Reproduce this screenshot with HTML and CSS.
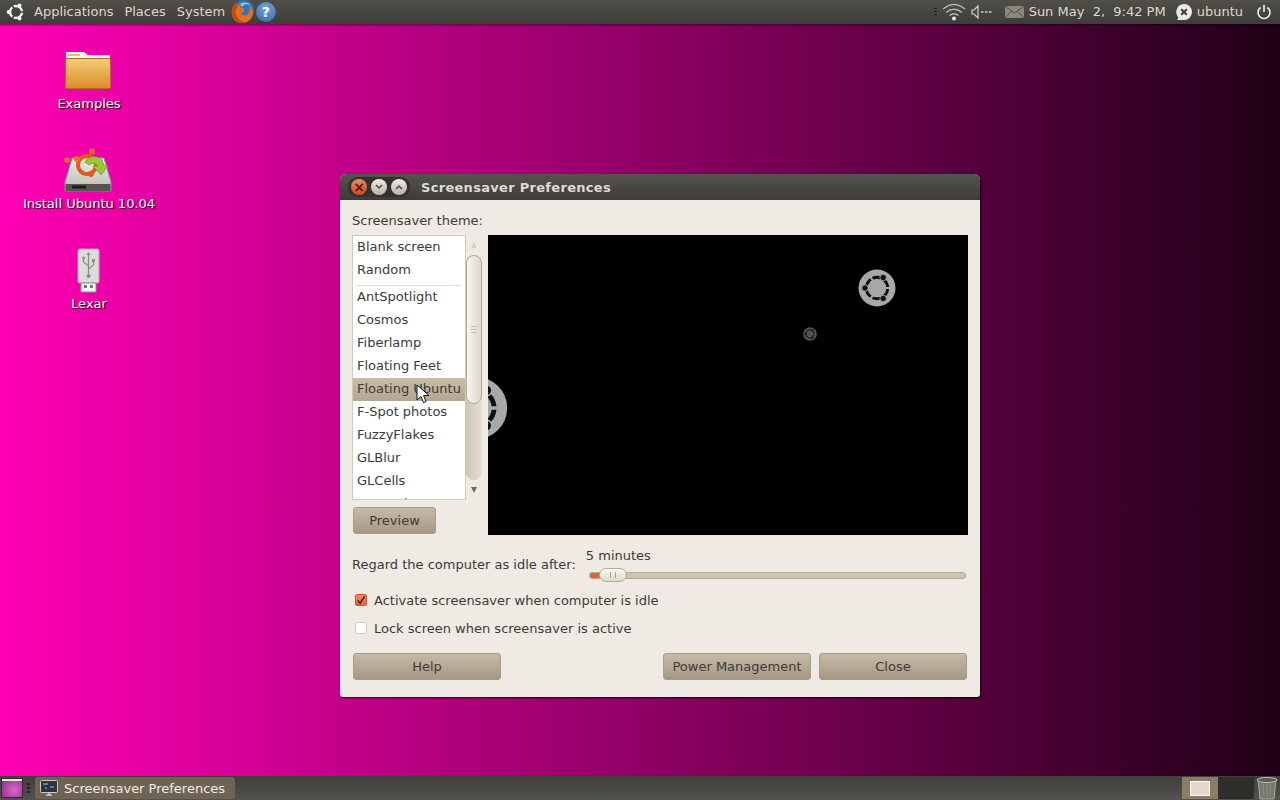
FILE: index.html
```html
<!DOCTYPE html>
<html lang="en">
  <head>
    <meta charset="UTF-8" />
    <title>Screensaver Preferences</title>
    <link rel="stylesheet" href="styles.css">
  </head>
  <body>
    <svg class="defs" width="0" height="0">
      <symbol id="ubuntuLogo" viewBox="0 0 40 40">
        <circle cx="20" cy="20" r="19.5" fill="#a8a8a8" />
        <circle cx="20" cy="20" r="11.300" fill="none" stroke="#111" stroke-width="3" />
        <path d="M20 20H38M20 20L11 4.400M20 20L11 35.600" stroke="#a8a8a8" stroke-width="2.200" />
        <circle cx="26.500" cy="9" r="3.400" fill="#111" stroke="#a8a8a8" />
        <circle cx="26.500" cy="31" r="3.400" fill="#111" stroke="#a8a8a8" />
        <circle cx="7.300" cy="20" r="3.400" fill="#111" stroke="#a8a8a8" />
      </symbol>
    </svg>

    <div class="top-panel">
      <div class="panel-left">
        <svg class="foot" width="20" height="20" viewBox="0 0 20 20">
          <circle cx="10" cy="10" r="6" fill="none" stroke="#f4f2ee" stroke-width="2.400" />
          <path d="M10 10L17 10M10 10L6 3M10 10L6 17" stroke="#45443f" stroke-width="1.600" />
          <circle cx="13.500" cy="3.600" r="2" fill="#f4f2ee" />
          <circle cx="13.500" cy="16.400" r="2" fill="#f4f2ee" />
          <circle cx="2.600" cy="10" r="2" fill="#f4f2ee" />
        </svg>
        <span class="menu-item">Applications</span>
        <span class="menu-item">Places</span>
        <span class="menu-item">System</span>
        <svg class="launcher" width="24" height="24" viewBox="0 0 24 24">
          <circle cx="13" cy="10" r="10" fill="#2f78c0" />
          <path d="M9 4c3-2 8-2 10 1-2-1-5-1-6 0l-2 2z" fill="#8cc4ec" />
          <path d="M18 5c4 3 5 8 3 12-2 4-6 6-10 6C6 23 2 20 1 15 0 10 2 6 5 3c0 2 0 3 1 4 1-2 3-3 5-3-1 1-2 2-2 4 1-.5 3 0 4 1 1 2-1 3-3 4 1 2 3 3 6 2 3-2 3-7 2-10z" fill="#e3701c" />
          <path d="M5 3c0 2 0 3 1 4-2 3-2 8 1 11 2 3 5 4 8 4-1 .6-2.600 1-4 1C6 23 2 20 1 15 0 10 2 6 5 3z" fill="#c24a10" />
        </svg>
        <span class="help-icon">?</span>
      </div>
      <div class="panel-right">
        <span class="tray-handle"></span>
        <svg class="wifi" width="24" height="20" viewBox="0 0 24 20">
          <path d="M1 7Q12-2 23 7M4 10.500Q12 4 20 10.500M7.500 13.500Q12 10 16.500 13.500" fill="none" stroke="#b8b5ad" stroke-width="1.400" />
          <circle cx="12" cy="16.500" r="2" fill="#f0eee8" />
        </svg>
        <svg class="speaker" width="22" height="14" viewBox="0 0 22 14">
          <path d="M1 5h2l4-4v12l-4-4H1z" fill="none" stroke="#d6d3cb" stroke-width="1.200" />
          <path d="M10 7h2.500M14 7h2.500M18 7h2.500" stroke="#d6d3cb" stroke-width="1.300" />
        </svg>
        <svg class="mail" width="19" height="12" viewBox="0 0 19 12">
          <rect width="19" height="12" fill="#8a877e" />
          <path d="M0 0l9.500 7L19 0M0 12l7-7M19 12l-7-7" fill="none" stroke="#55534d" />
        </svg>
        <span class="clock">Sun May &nbsp;2, &nbsp;9:42 PM</span>
        <svg class="me-icon" width="18" height="18" viewBox="0 0 18 18">
          <path d="M9 1a8 8 0 0 1 0 16H2l1.500-2.500A8 8 0 0 1 9 1z" fill="#ece9e2" />
          <path d="M6.200 6.200l5.600 5.600M11.800 6.200l-5.600 5.600" stroke="#3c3b37" stroke-width="2" />
        </svg>
        <span class="user-name">ubuntu</span>
        <svg class="power" width="16" height="16" viewBox="0 0 16 16">
          <path d="M4.700 3.500a6 6 0 1 0 6.600 0" fill="none" stroke="#ece9e2" stroke-width="1.700" />
          <path d="M8 1v7" stroke="#ece9e2" stroke-width="1.700" />
        </svg>
      </div>
    </div>

    <div class="desktop">
      <div class="desk-icon icon-examples">
        <svg width="48" height="48" viewBox="0 0 48 48">
          <defs>
            <linearGradient id="folderFill" x1="0" y1="0" x2="0" y2="1">
              <stop offset="0" stop-color="#f0cf78" />
              <stop offset="1" stop-color="#dc8a2a" />
            </linearGradient>
          </defs>
          <path d="M2 5a1 1 0 0 1 1-1h17l4 3h21a1 1 0 0 1 1 1v10H2z" fill="#f6f4f0" />
          <rect x="4" y="6" width="12" height="2" fill="#e8b878" />
          <rect x="1.500" y="10.500" width="45" height="30" rx="1.500" fill="url(#folderFill)" stroke="#b06c20" />
        </svg>
        <span class="desk-label">Examples</span>
      </div>
      <div class="desk-icon icon-install">
        <svg width="48" height="48" viewBox="0 0 48 48">
          <defs>
            <linearGradient id="driveFill" x1="0" y1="0" x2="0" y2="1">
              <stop offset="0" stop-color="#f0f0ec" />
              <stop offset="1" stop-color="#b8b8b2" />
            </linearGradient>
          </defs>
          <path d="M8 10h32l7 24v9H1v-9z" fill="url(#driveFill)" stroke="#8a8a84" />
          <ellipse cx="24" cy="24" rx="17" ry="9" fill="none" stroke="#d2d2cc" />
          <rect x="1.500" y="36" width="45" height="7" fill="#55554f" />
          <rect x="8" y="37.500" width="14" height="3" fill="#1c1c1a" />
          <circle cx="23" cy="17" r="9" fill="none" stroke="#e2591a" stroke-width="4" />
          <circle cx="13" cy="11" r="3" fill="#e8701e" />
          <circle cx="28" cy="3.500" r="3" fill="#e8701e" />
          <circle cx="27" cy="26" r="3" fill="#e2591a" />
          <circle cx="3" cy="12" r="2.800" fill="#e8701e" />
          <path d="M21 14a10 9 0 0 1 17-2l2 6h4l-7 9-8-9h5a6 6 0 0 0-9-1z" fill="#9cc43c" stroke="#74a024" stroke-width=".8" />
        </svg>
        <span class="desk-label">Install Ubuntu 10.04</span>
      </div>
      <div class="desk-icon icon-lexar">
        <svg width="48" height="48" viewBox="0 0 48 48">
          <rect x="13" y="1" width="21" height="34" rx="1.500" fill="#dcdcd8" stroke="#b0b0aa" />
          <rect x="16" y="35" width="15" height="9" fill="#f4f4f2" stroke="#8e8e88" />
          <rect x="19" y="37" width="3" height="3" fill="#77776f" />
          <rect x="25" y="37" width="3" height="3" fill="#77776f" />
          <path d="M23.500 6v22M23.500 18l-5-4v-3M23.500 21l5-4v-3" fill="none" stroke="#8e8e88" stroke-width="1.300" />
          <circle cx="23.500" cy="28" r="2" fill="#8e8e88" />
          <circle cx="18.500" cy="10" r="1.500" fill="#8e8e88" />
          <rect x="27" y="11" width="3" height="3" fill="#8e8e88" />
          <path d="M23.500 4l-2 3h4z" fill="#8e8e88" />
        </svg>
        <span class="desk-label">Lexar</span>
      </div>

      <div class="window">
        <div class="title-bar">
          <div class="win-buttons">
            <span class="win-btn win-close">&#215;</span>
            <span class="win-btn">
              <svg width="8" height="6" viewBox="0 0 8 6"><path d="M1 1l3 3 3-3" fill="none" stroke="#4a4842" stroke-width="1.500" /></svg>
            </span>
            <span class="win-btn">
              <svg width="8" height="6" viewBox="0 0 8 6"><path d="M1 5l3-3 3 3" fill="none" stroke="#4a4842" stroke-width="1.500" /></svg>
            </span>
          </div>
          <span class="win-title">Screensaver Preferences</span>
        </div>
        <div class="win-body">
          <div class="theme-label">Screensaver theme:</div>
          <div class="theme-row">
            <div class="theme-col">
              <div class="list-wrap">
                <ul class="theme-list">
                  <li>Blank screen</li>
                  <li>Random</li>
                  <li class="list-sep"></li>
                  <li>AntSpotlight</li>
                  <li>Cosmos</li>
                  <li>Fiberlamp</li>
                  <li>Floating Feet</li>
                  <li class="selected">Floating Ubuntu</li>
                  <li>F-Spot photos</li>
                  <li>FuzzyFlakes</li>
                  <li>GLBlur</li>
                  <li>GLCells</li>
                  <li>GLMatrix</li>
                </ul>
                <div class="scrollbar">
                  <span class="arrow-up"></span>
                  <div class="scroll-track">
                    <div class="scroll-thumb"><span class="thumb-grip"></span></div>
                  </div>
                  <span class="arrow-down"></span>
                </div>
                <svg class="cursor" width="14" height="21" viewBox="0 0 14 21">
                  <path d="M1 1v15l4-3.500 2.500 6 2.500-1-2.500-6H13z" fill="#fff" stroke="#111" />
                </svg>
              </div>
              <button class="btn btn-preview">Preview</button>
            </div>
            <div class="preview">
              <svg class="logo logo-big"><use href="#ubuntuLogo" /></svg>
              <svg class="logo logo-mid"><use href="#ubuntuLogo" /></svg>
              <svg class="logo logo-small"><use href="#ubuntuLogo" /></svg>
            </div>
          </div>

          <div class="idle-row">
            <span class="idle-label">Regard the computer as idle after:</span>
            <div class="idle-control">
              <div class="idle-value">5 minutes</div>
              <div class="slider">
                <div class="slider-fill"></div>
                <div class="slider-thumb"><span class="grip-lines"></span></div>
              </div>
            </div>
          </div>

          <label class="check-row">
            <span class="check checked">
              <svg width="11" height="11" viewBox="0 0 11 11"><path d="M2 5.500l2.500 3L9.500 1" fill="none" stroke="#3a2a22" stroke-width="1.800" /></svg>
            </span>
            Activate screensaver when computer is idle
          </label>
          <label class="check-row">
            <span class="check"></span>
            Lock screen when screensaver is active
          </label>

          <div class="action-row">
            <button class="btn btn-wide">Help</button>
            <div class="action-right">
              <button class="btn btn-wide">Power Management</button>
              <button class="btn btn-wide">Close</button>
            </div>
          </div>
        </div>
      </div>
    </div>

    <div class="bottom-panel">
      <div class="panel-left">
        <div class="show-desktop"><span class="show-title"></span></div>
        <span class="handle"></span>
        <div class="task-button">
          <svg width="18" height="17" viewBox="0 0 18 17">
            <rect x=".5" y=".5" width="17" height="12" rx="1" fill="#2c3440" stroke="#c8ccd0" />
            <path d="M3 4h5M10 7h4M5 8h2" stroke="#a8c0dc" />
            <path d="M6 15h6M9 13v2" stroke="#c8ccd0" stroke-width="1.500" />
          </svg>
          <span>Screensaver Preferences</span>
        </div>
      </div>
      <div class="panel-right">
        <div class="workspace active"><span class="ws-window"></span></div>
        <div class="workspace"></div>
        <svg class="trash" width="24" height="24" viewBox="0 0 24 24">
          <path d="M3 3h18l-2 20H5z" fill="#77776f" stroke="#a8a8a0" />
          <ellipse cx="12" cy="4" rx="10" ry="2.500" fill="#5a5a54" stroke="#c0c0b8" />
          <path d="M8 8l1 13M16 8l-1 13M12 8v13" stroke="#8e8e86" />
        </svg>
      </div>
    </div>
  </body>
</html>
```

FILE: styles.css
```css
html,
body {
  height: 100%;
}
body {
  margin: 0;
  width: 1280px;
  height: 800px;
  overflow: hidden;
  display: flex;
  flex-direction: column;
  font-family: "DejaVu Sans", sans-serif;
  font-size: 13px;
  color: #3c3b37;
  background-color: #3c3b37;
}
.defs {
  position: absolute;
}

/* panels */
.top-panel,
.bottom-panel {
  display: flex;
  justify-content: space-between;
  align-items: center;
  flex: none;
  height: 24px;
  background: linear-gradient(#514f4a, #3d3c38);
  color: #dfd8c8;
}
.top-panel {
  box-shadow: 0 1px 2px rgba(0, 0, 0, 0.5);
  position: relative;
  z-index: 2;
}
.bottom-panel {
  background: linear-gradient(#3f3e3a, #54524d);
}
.panel-left,
.panel-right {
  display: flex;
  align-items: center;
  height: 100%;
}
.foot {
  margin: 0 2.500px 0 6px;
}
.menu-item {
  margin: 0 5.500px 2px;
}
.help-icon {
  width: 20px;
  height: 20px;
  margin-left: 1px;
  border-radius: 50%;
  background: radial-gradient(circle at 50% 30%, #7aa6d6, #2f64a4);
  color: #f2f6fa;
  font-size: 14px;
  font-weight: bold;
  line-height: 20px;
  text-align: center;
}
.tray-handle {
  width: 3px;
  height: 9px;
  margin-right: 5px;
  background: repeating-linear-gradient(#23221f 0 1px, transparent 1px 3px);
}
.wifi {
  margin-right: 5px;
}
.speaker {
  margin-right: 12px;
}
.mail {
  margin-right: 5px;
}
.clock {
  margin: 0 9px 2px 0;
  white-space: nowrap;
}
.user-name {
  margin: 0 13px 2px 4px;
}
.power {
  margin-right: 8px;
}

/* desktop canvas */
.desktop {
  position: relative;
  flex: 1;
  background: linear-gradient(90deg, #ff00b4 0%, #900065 50%, #200016 100%);
}
.desk-icon {
  position: absolute;
  width: 160px;
  left: 9px;
  display: flex;
  flex-direction: column;
  align-items: center;
  color: #fff;
}
.icon-examples {
  top: 24px;
}
.icon-install {
  top: 124px;
}
.icon-lexar {
  top: 224px;
}
.icon-examples svg,
.icon-install svg {
  margin-left: -2px;
}
.desk-label {
  height: 16px;
  line-height: 16px;
  text-shadow: 1px 1px 1px #000;
}

/* window */
.window {
  position: absolute;
  left: 340px;
  top: 150px;
  width: 640px;
  height: 523px;
  border-radius: 6px 6px 3px 3px;
  background-color: #efebe4;
  box-shadow: 1px 1px 2px rgba(0, 0, 0, 0.8);
  overflow: hidden;
}
.title-bar {
  display: flex;
  align-items: center;
  height: 26px;
  background: linear-gradient(#55534e, #3c3b37);
}
.win-buttons {
  display: flex;
  align-items: center;
  gap: 4px;
  margin-left: 8px;
  padding: 2px 3px;
  border-radius: 9px;
  background-color: #33322e;
}
.win-btn {
  display: flex;
  align-items: center;
  justify-content: center;
  width: 16px;
  height: 16px;
  border-radius: 50%;
  background: linear-gradient(#f0ece4, #b8b4aa);
}
.win-close {
  background: linear-gradient(#f08a60, #d8441e);
  color: #4a2014;
  font-size: 14px;
  font-weight: bold;
  line-height: 16px;
}
.win-title {
  margin-left: 11px;
  color: #dfdbd2;
  font-weight: bold;
  letter-spacing: 0.3px;
  white-space: nowrap;
}
.win-body {
  padding: 13px 12px 12px;
}
.theme-label {
  height: 16px;
  line-height: 16px;
  margin-bottom: 6px;
}
.theme-row {
  display: flex;
  gap: 6px;
  height: 300px;
}
.theme-col {
  width: 130px;
}
.list-wrap {
  position: relative;
  display: flex;
  height: 265px;
}
.theme-list {
  width: 114px;
  box-sizing: border-box;
  margin: 0;
  padding: 0;
  list-style: none;
  background-color: #fff;
  border: 1px solid #d2cab8;
  overflow: hidden;
}
.theme-list li {
  height: 23px;
  line-height: 22px;
  padding-left: 4px;
  white-space: nowrap;
}
.theme-list .list-sep {
  height: 4px;
  margin: 0 4px;
  padding: 0;
  border-bottom: 1px solid #e4dfd4;
  box-sizing: border-box;
}
.theme-list .selected {
  background: linear-gradient(#c9bda8, #b3a690);
}
.scrollbar {
  display: flex;
  flex-direction: column;
  align-items: center;
  width: 16px;
}
.arrow-up,
.arrow-down {
  flex: none;
  margin: 7px 0;
  border-left: 3px solid transparent;
  border-right: 3px solid transparent;
}
.arrow-up {
  border-bottom: 6px solid #d6cfc0;
}
.arrow-down {
  border-top: 6px solid #6e6a60;
}
.scroll-track {
  flex: 1;
  width: 100%;
  border-radius: 8px;
  background: linear-gradient(90deg, #cfc6b4, #e4dfd4);
}
.scroll-thumb {
  display: flex;
  align-items: center;
  justify-content: center;
  box-sizing: border-box;
  height: 149px;
  border: 1px solid #b4aa96;
  border-radius: 8px;
  background: linear-gradient(90deg, #f8f6f2, #ded7ca);
}
.thumb-grip {
  width: 6px;
  height: 8px;
  background: repeating-linear-gradient(#c8c0b0 0 1px, transparent 1px 3px);
}
.cursor {
  position: absolute;
  left: 64px;
  top: 149px;
}
.btn {
  height: 27px;
  box-sizing: border-box;
  padding: 0 0 1px;
  border: 1px solid #a89c8a;
  border-radius: 3px;
  background: linear-gradient(#c6baa6, #a69a86);
  color: #3c3b37;
  font: inherit;
}
.btn-preview {
  width: 83px;
  margin: 7px 0 0 1px;
}
.preview {
  position: relative;
  width: 480px;
  height: 300px;
  background-color: #000;
  overflow: hidden;
}
.logo {
  position: absolute;
}
.logo-big {
  left: -44px;
  top: 141px;
  width: 64px;
  height: 64px;
}
.logo-mid {
  left: 370px;
  top: 34px;
  width: 38px;
  height: 38px;
}
.logo-small {
  left: 315px;
  top: 92px;
  width: 14px;
  height: 14px;
  opacity: 0.5;
}

/* idle slider */
.idle-row {
  display: flex;
  margin-top: 13px;
}
.idle-label {
  margin-top: 9px;
  line-height: 16px;
}
.idle-control {
  margin: 0 2px 0 13px;
  flex: 1;
}
.idle-value {
  height: 16px;
  line-height: 16px;
  margin-left: -3px;
}
.slider {
  position: relative;
  height: 5px;
  margin-top: 8px;
  border: 1px solid #b4aa96;
  border-radius: 3px;
  background-color: #cdc5b2;
}
.slider-fill {
  width: 12px;
  height: 100%;
  border-radius: 3px;
  background-color: #e9623c;
}
.slider-thumb {
  position: absolute;
  left: 9px;
  top: -5px;
  display: flex;
  align-items: center;
  justify-content: center;
  box-sizing: border-box;
  width: 28px;
  height: 14px;
  border: 1px solid #b4aa96;
  border-radius: 7px;
  background: linear-gradient(#fbfaf7, #ded7ca);
}
.grip-lines {
  width: 4px;
  height: 6px;
  border-left: 1px solid #a89e8c;
  border-right: 1px solid #a89e8c;
}

/* checks and actions */
.check-row {
  display: flex;
  align-items: center;
  gap: 7px;
  height: 28px;
  margin-left: 3px;
}
.check-row:first-of-type {
  margin-top: 7px;
}
.check {
  display: flex;
  align-items: center;
  justify-content: center;
  box-sizing: border-box;
  width: 12px;
  height: 12px;
  border: 1px solid #d2cab8;
  border-radius: 2px;
  background-color: #fff;
}
.check.checked {
  border-color: #d8532c;
  background: linear-gradient(#f58a68, #e9623c);
}
.action-row {
  display: flex;
  justify-content: space-between;
  margin: 11px 1px 0;
}
.action-right {
  display: flex;
  gap: 8px;
}
.btn-wide {
  width: 148px;
}

/* bottom panel */
.show-desktop {
  width: 22px;
  height: 20px;
  margin-left: 1px;
  background: radial-gradient(circle at 60% 60%, #d868c8, #8a2a88);
  border: 1px solid #2e2d2a;
  box-sizing: border-box;
}
.show-title {
  display: block;
  height: 2px;
  background-color: #e8e4d8;
}
.handle {
  width: 3px;
  height: 10px;
  margin: 0 5px 0 4px;
  background: repeating-linear-gradient(#23221f 0 2px, transparent 2px 4px);
}
.task-button {
  display: flex;
  align-items: center;
  gap: 6px;
  width: 200px;
  height: 22px;
  box-sizing: border-box;
  padding-left: 5px;
  border-radius: 3px;
  background-color: #6f6353;
  color: #efebe4;
  white-space: nowrap;
}
.workspace {
  display: flex;
  align-items: center;
  justify-content: center;
  width: 36px;
  height: 22px;
  background-color: #2f2e2a;
}
.workspace.active {
  background-color: #8a7c66;
}
.ws-window {
  width: 18px;
  height: 13px;
  border: 1px solid #fff;
  background-color: #e2dacc;
}
.trash {
  margin: 0 1px;
}
```
